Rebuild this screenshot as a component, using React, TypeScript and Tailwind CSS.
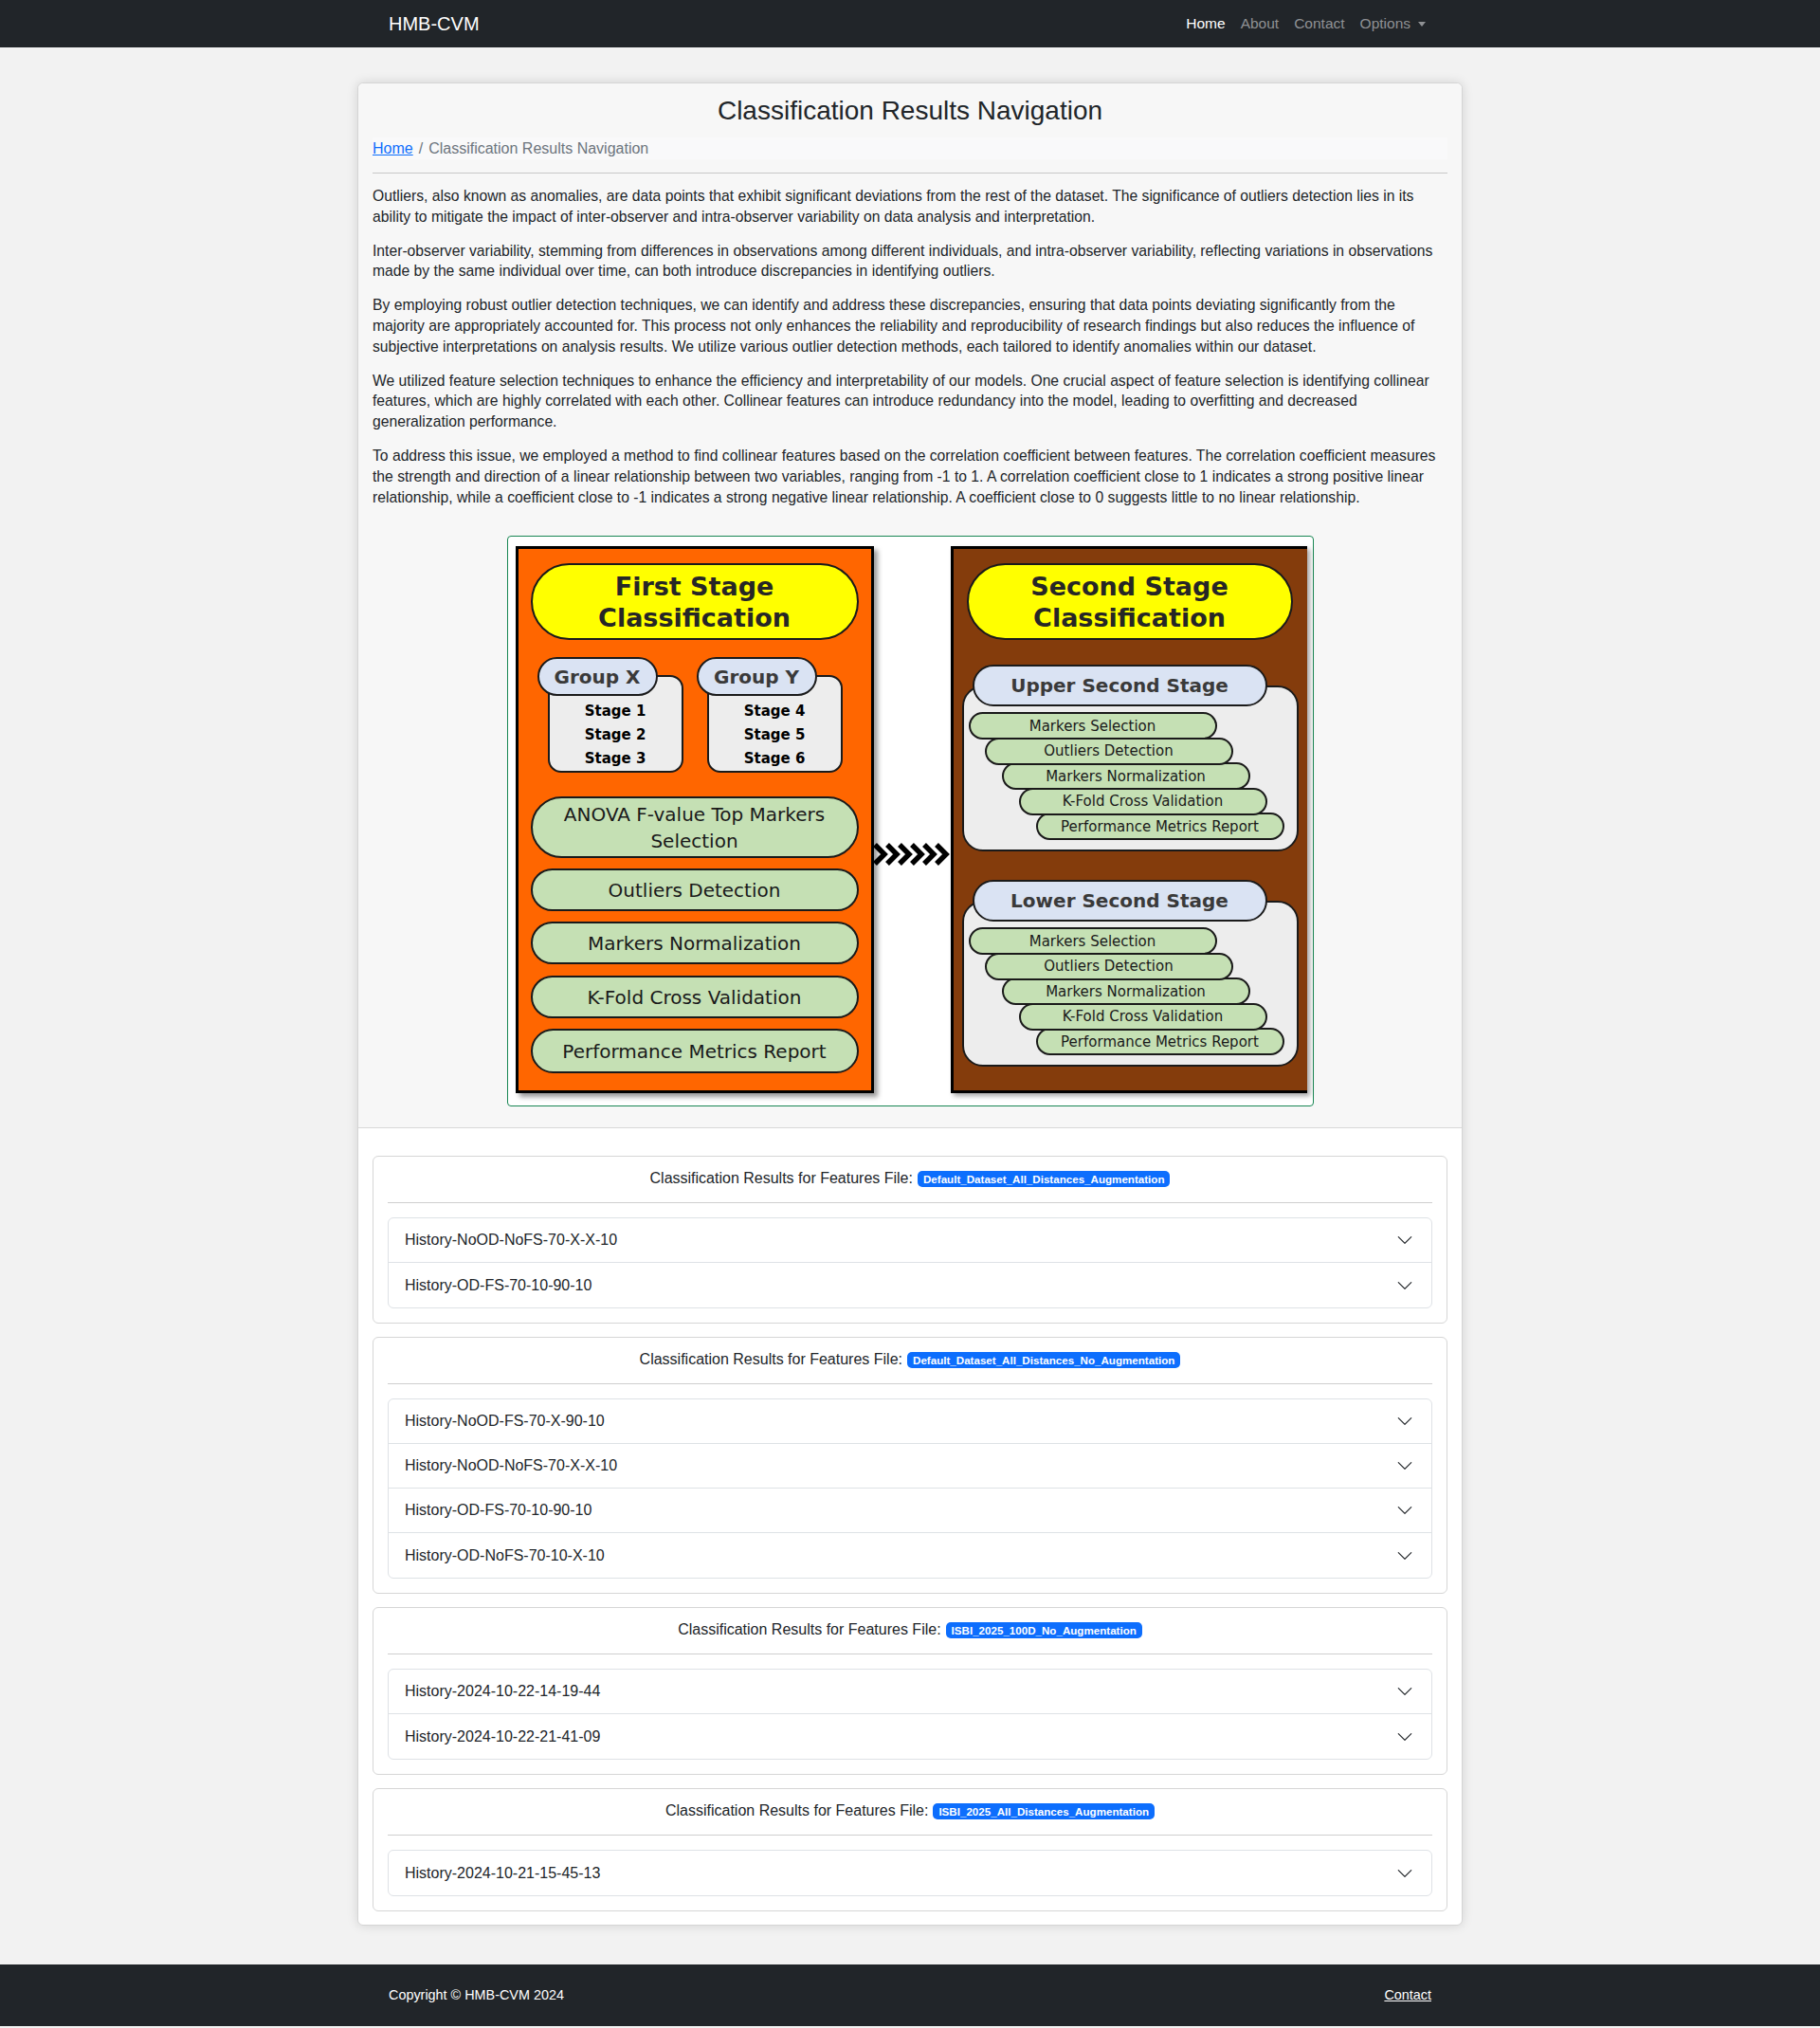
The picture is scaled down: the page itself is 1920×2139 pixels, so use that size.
import React from 'react';

const paragraphs = [
  'Outliers, also known as anomalies, are data points that exhibit significant deviations from the rest of the dataset. The significance of outliers detection lies in its ability to mitigate the impact of inter-observer and intra-observer variability on data analysis and interpretation.',
  'Inter-observer variability, stemming from differences in observations among different individuals, and intra-observer variability, reflecting variations in observations made by the same individual over time, can both introduce discrepancies in identifying outliers.',
  'By employing robust outlier detection techniques, we can identify and address these discrepancies, ensuring that data points deviating significantly from the majority are appropriately accounted for. This process not only enhances the reliability and reproducibility of research findings but also reduces the influence of subjective interpretations on analysis results. We utilize various outlier detection methods, each tailored to identify anomalies within our dataset.',
  'We utilized feature selection techniques to enhance the efficiency and interpretability of our models. One crucial aspect of feature selection is identifying collinear features, which are highly correlated with each other. Collinear features can introduce redundancy into the model, leading to overfitting and decreased generalization performance.',
  'To address this issue, we employed a method to find collinear features based on the correlation coefficient between features. The correlation coefficient measures the strength and direction of a linear relationship between two variables, ranging from -1 to 1. A correlation coefficient close to 1 indicates a strong positive linear relationship, while a coefficient close to -1 indicates a strong negative linear relationship. A coefficient close to 0 suggests little to no linear relationship.',
];

const results = [
  { file: 'Default_Dataset_All_Distances_Augmentation', items: ['History-NoOD-NoFS-70-X-X-10', 'History-OD-FS-70-10-90-10'] },
  {
    file: 'Default_Dataset_All_Distances_No_Augmentation',
    items: ['History-NoOD-FS-70-X-90-10', 'History-NoOD-NoFS-70-X-X-10', 'History-OD-FS-70-10-90-10', 'History-OD-NoFS-70-10-X-10'],
  },
  { file: 'ISBI_2025_100D_No_Augmentation', items: ['History-2024-10-22-14-19-44', 'History-2024-10-22-21-41-09'] },
  { file: 'ISBI_2025_All_Distances_Augmentation', items: ['History-2024-10-21-15-45-13'] },
];

const steps = ['Markers Selection', 'Outliers Detection', 'Markers Normalization', 'K-Fold Cross Validation', 'Performance Metrics Report'];
const stepOffsets = ['ml-[5px] z-50', 'ml-[22px] z-40', 'ml-[40px] z-30', 'ml-[58px] z-20', 'ml-[76px] z-10'];

function Chevron() {
  return (
    <svg viewBox="0 0 16 16" className="h-[18px] w-[18px]" fill="#212529">
      <path d="M1.646 4.646a.5.5 0 0 1 .708 0L8 10.293l5.646-5.647a.5.5 0 0 1 .708.708l-6 6a.5.5 0 0 1-.708 0l-6-6a.5.5 0 0 1 0-.708z" />
    </svg>
  );
}

function GroupBox({ name, stages }: { name: string; stages: string[] }) {
  return (
    <div className="flex w-[154px] flex-col items-start">
      <div className="relative z-10 flex h-[41px] w-[127px] items-center justify-center rounded-full border-[2.5px] border-[#1a1a1a] bg-[#dae3f3] text-[20px] font-bold text-[#3a3a3a]">
        {name}
      </div>
      <div className="-mt-[22px] ml-[11px] w-[143px] rounded-[14px] border-[2.5px] border-[#1a1a1a] bg-[#ededed] pt-[24px] text-center text-[15px] leading-[25px] font-bold text-black">
        {stages.map((s) => (
          <div key={s}>{s}</div>
        ))}
      </div>
    </div>
  );
}

function StageBox({ title }: { title: string }) {
  return (
    <div className="flex flex-col items-start">
      <div className="relative z-[60] ml-[20px] flex h-[44px] w-[311px] items-center justify-center rounded-full border-[2.5px] border-[#1a1a1a] bg-[#dae3f3] text-[20px] font-bold text-[#3a3a3a]">
        {title}
      </div>
      <div className="-mt-[22px] ml-[9px] flex h-[175px] w-[355px] flex-col rounded-[22px] border-[2.5px] border-[#1a1a1a] bg-[#ededed] pt-[26px]">
        {steps.map((s, i) => (
          <div
            key={s}
            className={`relative flex h-[29px] w-[262px] items-center justify-center rounded-full border-2 border-[#1a1a1a] bg-[#c5e0b4] text-[15px] text-[#1a1a1a] ${
              stepOffsets[i]
            } ${i > 0 ? '-mt-[2.5px]' : ''}`}
          >
            {s}
          </div>
        ))}
      </div>
    </div>
  );
}

function GreenPill({ children, h, className = '' }: { children: React.ReactNode; h: string; className?: string }) {
  return (
    <div
      className={`flex w-[346px] items-center justify-center rounded-full border-[2.5px] border-[#1a1a1a] bg-[#c5e0b4] text-center text-[20px] leading-[28px] text-[#1a1a1a] ${h} ${className}`}
    >
      {children}
    </div>
  );
}

function Diagram() {
  return (
    <div className="mx-auto mt-[30px] flex h-[602px] w-[851px] rounded-[4px] border border-[#198754] bg-white pt-[10px] pl-[8px] font-['DejaVu_Sans',sans-serif]">
      {/* first stage */}
      <div className="flex h-[577px] w-[378px] flex-col border-[3px] border-black bg-[#ff6600] px-[13px] pt-[15px] shadow-[4px_4px_5px_rgba(0,0,0,0.4)]">
        <div className="flex h-[81px] w-[346px] items-center justify-center rounded-full border-[2.5px] border-[#1a1a1a] bg-[#ffff00] text-center text-[27px] leading-[33px] font-bold text-[#262626]">
          First Stage
          <br />
          Classification
        </div>
        <div className="mt-[18px] ml-[7px] flex gap-[14px]">
          <GroupBox name="Group X" stages={['Stage 1', 'Stage 2', 'Stage 3']} />
          <GroupBox name="Group Y" stages={['Stage 4', 'Stage 5', 'Stage 6']} />
        </div>
        <GreenPill h="h-[65px]" className="mt-[25px]">
          ANOVA F-value Top Markers
          <br />
          Selection
        </GreenPill>
        <GreenPill h="h-[45px]" className="mt-[11px]">
          Outliers Detection
        </GreenPill>
        <GreenPill h="h-[45px]" className="mt-[11px]">
          Markers Normalization
        </GreenPill>
        <GreenPill h="h-[45px]" className="mt-[12px]">
          K-Fold Cross Validation
        </GreenPill>
        <GreenPill h="h-[47px]" className="mt-[11px]">
          Performance Metrics Report
        </GreenPill>
      </div>

      {/* arrow */}
      <div className="w-[81px]">
        <svg viewBox="0 0 81 24" className="mt-[313px] h-[24px] w-[81px]">
          {[1, 14, 27, 40, 53, 66].map((x) => (
            <polyline key={x} points={`${x},2 ${x + 10},12 ${x},22`} fill="none" stroke="#000" strokeWidth="5.5" />
          ))}
        </svg>
      </div>

      {/* second stage */}
      <div className="flex h-[577px] w-[376px] flex-col border-y-[3px] border-l-[3px] border-black bg-[#843c0c] pt-[15px] shadow-[3px_3px_5px_rgba(0,0,0,0.35)]">
        <div className="ml-[14px] flex h-[81px] w-[344px] items-center justify-center rounded-full border-[2.5px] border-[#1a1a1a] bg-[#ffff00] text-center text-[27px] leading-[33px] font-bold text-[#262626]">
          Second Stage
          <br />
          Classification
        </div>
        <div className="mt-[26px]">
          <StageBox title="Upper Second Stage" />
        </div>
        <div className="mt-[30px]">
          <StageBox title="Lower Second Stage" />
        </div>
      </div>
    </div>
  );
}

function ResultCard({ file, items }: { file: string; items: string[] }) {
  return (
    <div className="rounded-[6px] border border-[#d6d6d6] bg-white px-[15px] pt-[12px] pb-[15px]">
      <div className="flex items-center justify-center gap-[5px] border-b border-[#cfcfcf] pb-[14px] text-[16px] leading-[22px] text-[#212529]">
        <span>Classification Results for Features File:</span>
        <span className="rounded-[5px] bg-[#0d6efd] px-[6px] py-[3px] text-[11.6px] leading-none font-bold text-white">{file}</span>
      </div>
      <div className="mt-[15px] rounded-[6px] border border-[#dee2e6]">
        {items.map((it, i) => (
          <div
            key={it}
            className={`flex h-[47px] items-center justify-between pr-[19px] pl-[17px] text-[16px] text-[#212529] ${
              i < items.length - 1 ? 'border-b border-[#dee2e6]' : ''
            }`}
          >
            <span>{it}</span>
            <Chevron />
          </div>
        ))}
      </div>
    </div>
  );
}

export default function App() {
  return (
    <div className="min-h-screen bg-[#f2f2f2] font-['Liberation_Sans',Arial,sans-serif] text-[#212529]">
      <nav className="h-[50px] bg-[#212529]">
        <div className="mx-auto flex h-full w-[1100px] items-center justify-between">
          <span className="text-[20px] text-white">HMB-CVM</span>
          <ul className="-mr-[2px] flex items-center text-[15.5px]">
            <li className="px-[8px] text-white">Home</li>
            <li className="px-[8px] text-[#8f9194]">About</li>
            <li className="px-[8px] text-[#8f9194]">Contact</li>
            <li className="flex items-center gap-[8px] px-[8px] text-[#8f9194]">
              Options
              <span className="h-0 w-0 border-x-[4px] border-t-[5px] border-x-transparent border-t-[#8f9194]" />
            </li>
          </ul>
        </div>
      </nav>

      <main className="mx-auto mt-[37px] mb-[41px] w-[1166px] rounded-[6px] border border-[#d5d5d5] bg-white shadow-[0_0_12px_rgba(0,0,0,0.13)]">
        <div className="rounded-t-[6px] border-b border-[#d8d8d8] bg-[#f7f7f7] px-[15px] pt-[12px] pb-[22px]">
          <h3 className="text-center text-[28px] leading-[34px] text-[#212529]">Classification Results Navigation</h3>
          <div className="mt-[11px] flex h-[23px] items-center bg-[#f9f9fa] text-[16px]">
            <a href="#" className="text-[#0d6efd] underline">
              Home
            </a>
            <span className="px-[6px] text-[#6c757d]">/</span>
            <span className="text-[#6c757d]">Classification Results Navigation</span>
          </div>
          <hr className="mt-[14px] border-t border-[#c8c8c8]" />
          <div className="mt-[13px]">
            {paragraphs.map((p, i) => (
              <p key={i} className="mb-[14px] text-[15.7px] leading-[21.8px] text-[#212529] last:mb-0">
                {p}
              </p>
            ))}
          </div>
          <Diagram />
        </div>
        <div className="flex flex-col gap-[14px] px-[15px] pt-[29px] pb-[14px]">
          {results.map((r) => (
            <ResultCard key={r.file} file={r.file} items={r.items} />
          ))}
        </div>
      </main>

      <footer className="h-[65px] bg-[#212529]">
        <div className="mx-auto flex h-full w-[1100px] items-center justify-between text-[14.4px] text-white">
          <span>Copyright © HMB-CVM 2024</span>
          <a href="#" className="underline">
            Contact
          </a>
        </div>
      </footer>
    </div>
  );
}
